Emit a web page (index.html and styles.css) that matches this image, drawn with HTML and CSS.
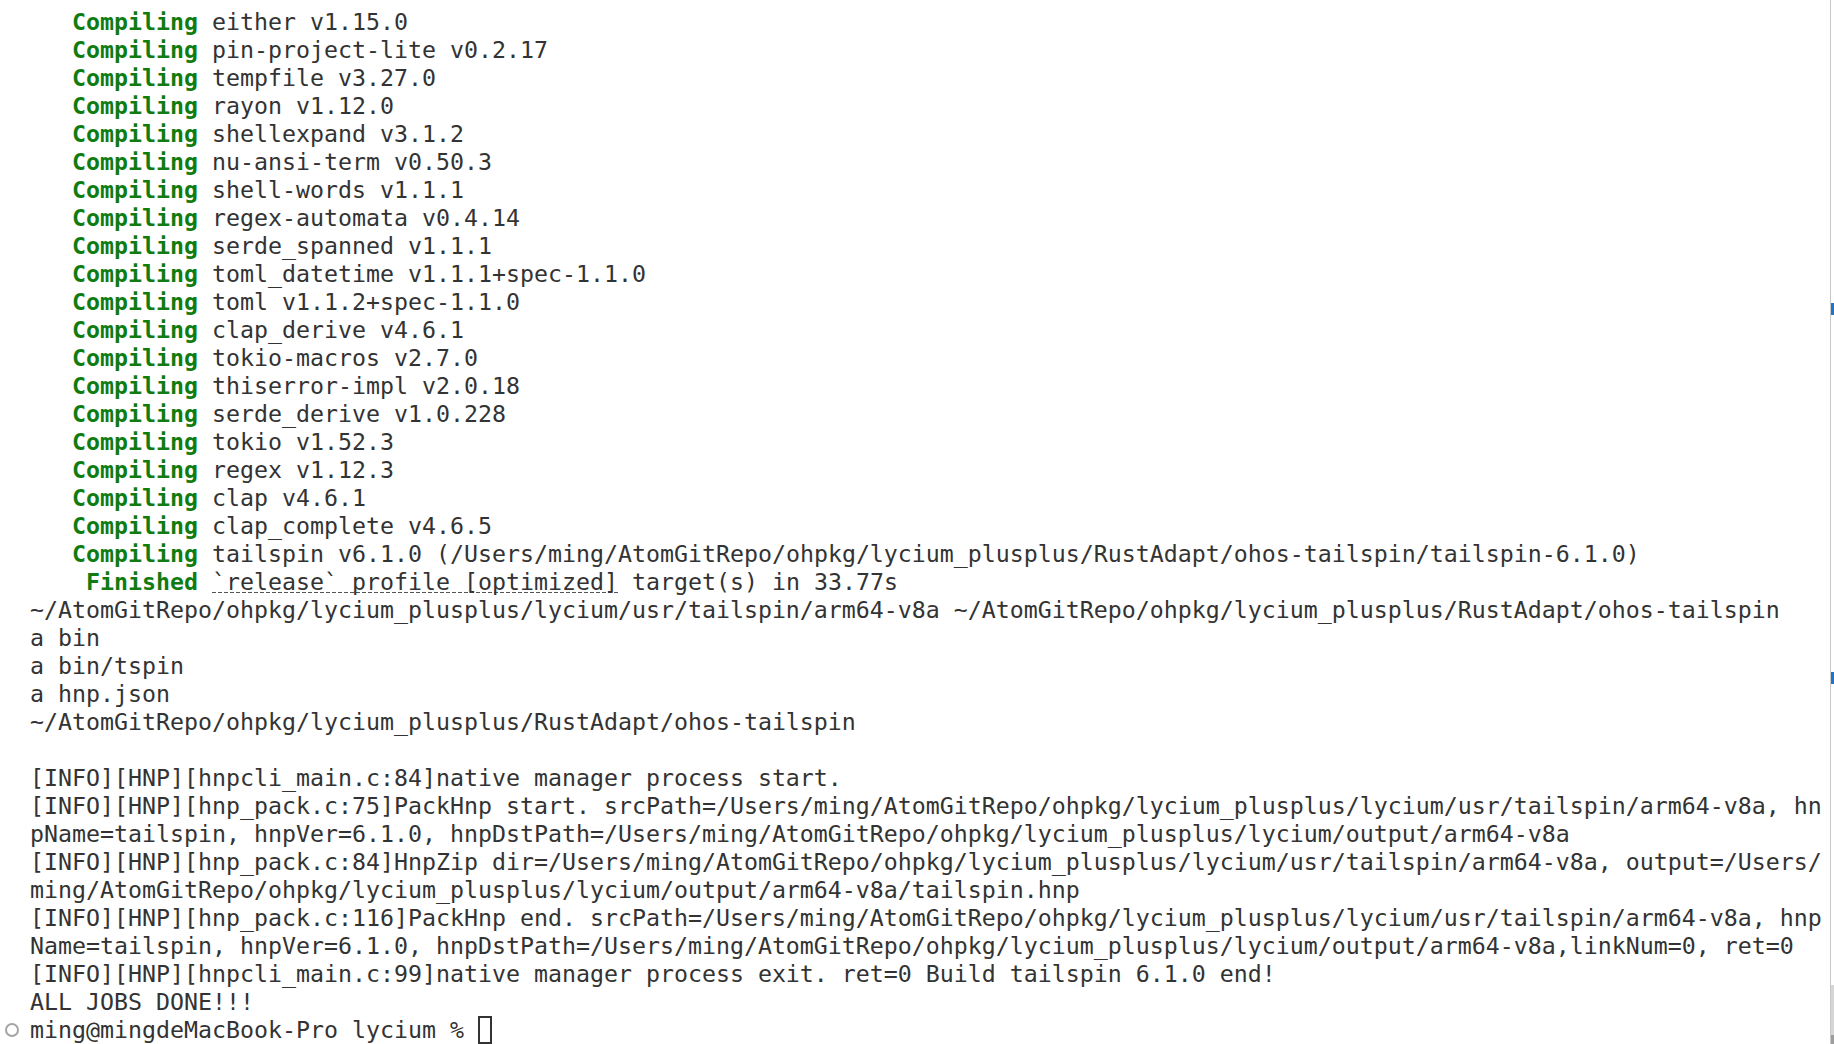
FILE: index.html
```html
<!DOCTYPE html>
<html>
<head>
<meta charset="utf-8">
<link rel="stylesheet" href="styles.css">
</head>
<body>
<div class="terminal">
  <div class="content">
<pre class="out"><span class="ok">   Compiling</span> either v1.15.0
<span class="ok">   Compiling</span> pin-project-lite v0.2.17
<span class="ok">   Compiling</span> tempfile v3.27.0
<span class="ok">   Compiling</span> rayon v1.12.0
<span class="ok">   Compiling</span> shellexpand v3.1.2
<span class="ok">   Compiling</span> nu-ansi-term v0.50.3
<span class="ok">   Compiling</span> shell-words v1.1.1
<span class="ok">   Compiling</span> regex-automata v0.4.14
<span class="ok">   Compiling</span> serde_spanned v1.1.1
<span class="ok">   Compiling</span> toml_datetime v1.1.1+spec-1.1.0
<span class="ok">   Compiling</span> toml v1.1.2+spec-1.1.0
<span class="ok">   Compiling</span> clap_derive v4.6.1
<span class="ok">   Compiling</span> tokio-macros v2.7.0
<span class="ok">   Compiling</span> thiserror-impl v2.0.18
<span class="ok">   Compiling</span> serde_derive v1.0.228
<span class="ok">   Compiling</span> tokio v1.52.3
<span class="ok">   Compiling</span> regex v1.12.3
<span class="ok">   Compiling</span> clap v4.6.1
<span class="ok">   Compiling</span> clap_complete v4.6.5
<span class="ok">   Compiling</span> tailspin v6.1.0 (/Users/ming/AtomGitRepo/ohpkg/lycium_plusplus/RustAdapt/ohos-tailspin/tailspin-6.1.0)
<span class="ok">    Finished</span> <span class="link">`release` profile [optimized]</span> target(s) in 33.77s
~/AtomGitRepo/ohpkg/lycium_plusplus/lycium/usr/tailspin/arm64-v8a ~/AtomGitRepo/ohpkg/lycium_plusplus/RustAdapt/ohos-tailspin
a bin
a bin/tspin
a hnp.json
~/AtomGitRepo/ohpkg/lycium_plusplus/RustAdapt/ohos-tailspin

[INFO][HNP][hnpcli_main.c:84]native manager process start.
[INFO][HNP][hnp_pack.c:75]PackHnp start. srcPath=/Users/ming/AtomGitRepo/ohpkg/lycium_plusplus/lycium/usr/tailspin/arm64-v8a, hn
pName=tailspin, hnpVer=6.1.0, hnpDstPath=/Users/ming/AtomGitRepo/ohpkg/lycium_plusplus/lycium/output/arm64-v8a
[INFO][HNP][hnp_pack.c:84]HnpZip dir=/Users/ming/AtomGitRepo/ohpkg/lycium_plusplus/lycium/usr/tailspin/arm64-v8a, output=/Users/
ming/AtomGitRepo/ohpkg/lycium_plusplus/lycium/output/arm64-v8a/tailspin.hnp
[INFO][HNP][hnp_pack.c:116]PackHnp end. srcPath=/Users/ming/AtomGitRepo/ohpkg/lycium_plusplus/lycium/usr/tailspin/arm64-v8a, hnp
Name=tailspin, hnpVer=6.1.0, hnpDstPath=/Users/ming/AtomGitRepo/ohpkg/lycium_plusplus/lycium/output/arm64-v8a,linkNum=0, ret=0
[INFO][HNP][hnpcli_main.c:99]native manager process exit. ret=0 Build tailspin 6.1.0 end!
ALL JOBS DONE!!!
<span class="prompt-line"><span class="deco"></span>ming@mingdeMacBook-Pro lycium % <span class="cursor"> </span></span></pre>
  </div>
  <div class="ruler">
    <span class="thumb"></span>
    <span class="thumb-end"></span>
    <span class="mark mark-a"></span>
    <span class="mark mark-b"></span>
  </div>
</div>
</body>
</html>
```

FILE: styles.css
```css
html, body {
  margin: 0;
  padding: 0;
  background: #ffffff;
  height: 100%;
  overflow: hidden;
}

.terminal {
  display: flex;
  height: 1044px;
  width: 1834px;
}

.content {
  flex: 1;
  padding: 8px 0 0 30px;
  overflow: hidden;
}

.out {
  margin: 0;
  font-family: "DejaVu Sans Mono", "Liberation Mono", monospace;
  font-size: 23.25px;
  line-height: 28px;
  color: #333333;
  white-space: pre;
}

.ok {
  color: #107c10;
  font-weight: bold;
}

.link {
  background-image: linear-gradient(to right, #555 4px, transparent 4px);
  background-size: 6px 1px;
  background-repeat: repeat-x;
  background-position: 0 calc(100% - 2px);
}

.prompt-line {
  position: relative;
}

.deco {
  position: absolute;
  left: -25px;
  top: 50%;
  width: 10px;
  height: 10px;
  margin-top: -7px;
  border: 2px solid #a5a5a5;
  border-radius: 50%;
}

.cursor {
  display: inline-block;
  width: 14px;
  height: 28px;
  box-sizing: border-box;
  border: 2px solid #333333;
  vertical-align: top;
}

.ruler {
  position: relative;
  width: 3px;
  border-left: 1px solid #c8c8c8;
}

.thumb {
  position: absolute;
  left: 0;
  right: 0;
  top: 985px;
  bottom: 0;
  background: #d6d6d6;
}

.thumb-end {
  position: absolute;
  left: 0;
  right: 0;
  top: 1035px;
  bottom: 0;
  background: #9e9e9e;
}

.mark {
  position: absolute;
  left: 0;
  width: 3px;
  height: 12px;
  background: #1f75c9;
}

.mark-a { top: 303px; }
.mark-b { top: 672px; }
```
